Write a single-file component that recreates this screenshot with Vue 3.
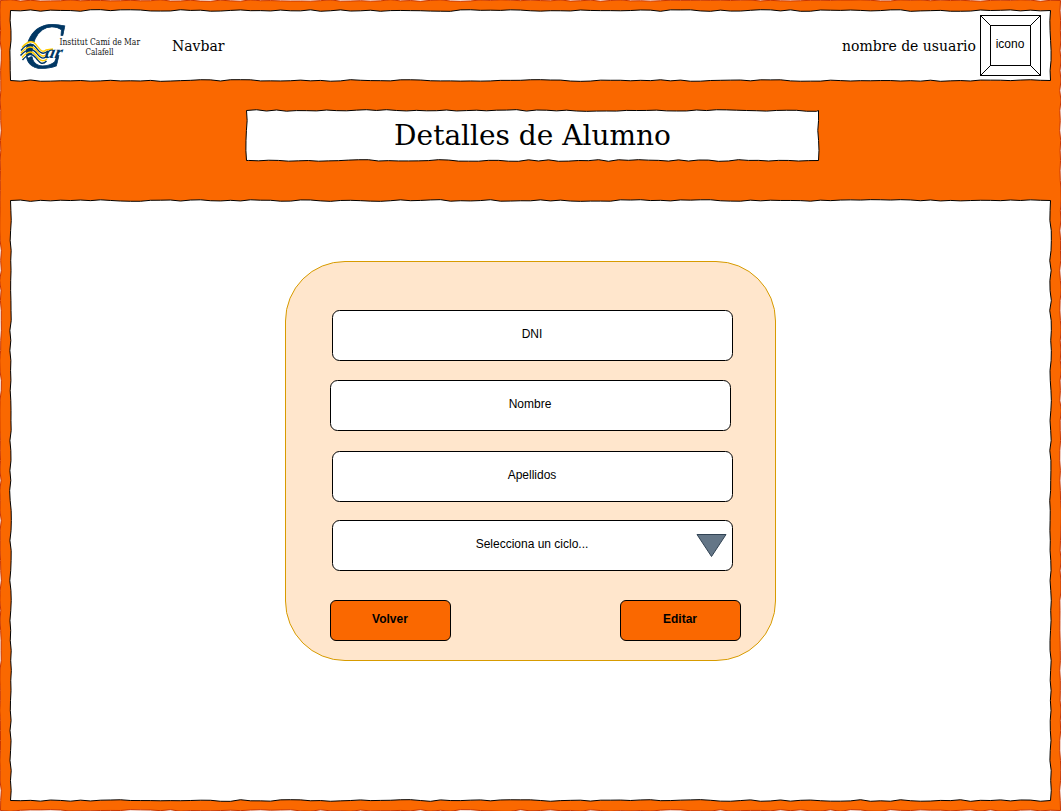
<script setup>
// Hand-drawn rectangle: every edge is split in 10px steps with a small deterministic wobble.
function sketch(w, h, seed) {
  let s = seed
  const rnd = () => {
    s = (s * 16807) % 2147483647
    return s / 2147483647
  }
  const corners = [[0.5, 0.5], [w + 0.5, 0.5], [w + 0.5, h + 0.5], [0.5, h + 0.5]]
  let d = 'M0.5 0.5'
  corners.forEach(([x, y], i) => {
    const [nx, ny] = corners[(i + 1) % 4]
    const len = Math.abs(nx - x) + Math.abs(ny - y)
    const ux = (nx - x) / len
    const uy = (ny - y) / len
    for (let p = 10; p < len; p += 10) {
      const j = (rnd() - 0.5) * 1.7
      d += `L${(x + ux * p + Math.abs(uy) * j).toFixed(2)} ${(y + uy * p + Math.abs(ux) * j).toFixed(2)}`
    }
    d += `L${nx} ${ny}`
  })
  return d + 'Z'
}

const frames = {
  page: sketch(1060, 810, 4127),
  header: sketch(1040, 70, 90211),
  title: sketch(572, 50, 7753),
  main: sketch(1040, 600, 31337),
}

const fields = [
  { label: 'DNI', cls: 'dni' },
  { label: 'Nombre', cls: 'nombre' },
  { label: 'Apellidos', cls: 'apellidos' },
  { label: 'Selecciona un ciclo...', cls: 'ciclo', select: true },
]
</script>

<template>
  <div class="page">
    <svg class="frame frame-page" width="1061" height="811"><path :d="frames.page" /></svg>

    <header class="header">
      <svg class="frame" width="1041" height="71"><path :d="frames.header" /></svg>
      <svg class="logo" width="124" height="81" viewBox="18 5 124 81">
        <text class="logo-c" transform="translate(21.8 68.2) skewX(-4) scale(.9 1)">C</text>
        <g class="waves">
          <path class="gap" d="M27 44C30 42 33 42 36 46S41 54 46 53M28 57C32 54 34 55 37 60" />
          <path class="gold" d="M22 47.500C27 41.500 32 40 35.500 44S42 54 46 50L53 49" />
          <path class="navy" d="M21 50.500C27 43.500 32 42.500 35.500 47S42 56 48 51" />
          <path class="gold" d="M21 53C27 46 32 45.500 35.500 49.500S42 59 48 54" />
          <path class="navy" d="M20.500 55.500C27 48.500 32 48 35.500 52S42 61 47 56" />
          <path class="gold" d="M22 57.500C28 51 32 50.500 35.500 55S42 63 47 59" />
          <path class="navy" d="M22.500 60C28 53.500 32 53 35.500 57.500S42 66 46.500 61" />
        </g>
        <text class="logo-ar" transform="translate(44.500 57.800) skewX(-12)" textLength="17" lengthAdjust="spacingAndGlyphs">ar</text>
        <text class="logo-name" x="59.500" y="44.500" textLength="80.500" lengthAdjust="spacingAndGlyphs">Institut Camí de Mar</text>
        <text class="logo-name" x="85.500" y="55.300" textLength="28" lengthAdjust="spacingAndGlyphs">Calafell</text>
      </svg>
      <nav class="nav">Navbar</nav>
      <span class="user">nombre de usuario</span>
      <div class="avatar">
        <svg class="bevel" width="61" height="61" shape-rendering="crispEdges">
          <path d="M.5 .5H60.500V60.500H.5ZM10.500 10.500H50.500V50.500H10.500ZM.5 .5L10.500 10.500M60.500 .5L50.500 10.500M60.500 60.500L50.500 50.500M.5 60.500L10.500 50.500" />
        </svg>
        <span class="avatar-label">icono</span>
      </div>
    </header>

    <h1 class="title">
      <svg class="frame" width="573" height="51"><path :d="frames.title" /></svg>
      <span class="title-text">Detalles de Alumno</span>
    </h1>

    <main class="main">
      <svg class="frame" width="1041" height="601"><path :d="frames.main" /></svg>
      <section class="panel">
        <div v-for="f in fields" :key="f.label" class="field" :class="f.cls">
          <span>{{ f.label }}</span>
          <svg v-if="f.select" class="arrow" width="32" height="25">
            <path d="M2 1.500H31L16.500 23.500Z" />
          </svg>
        </div>
        <div class="actions">
          <button class="btn">Volver</button>
          <button class="btn">Editar</button>
        </div>
      </section>
    </main>
  </div>
</template>

<style>
body {
  background: #fff;
}
</style>

<style scoped>
.page {
  position: relative;
  box-sizing: border-box;
  width: 1061px;
  height: 811px;
  padding: 10px;
  overflow: hidden;
  display: flex;
  flex-direction: column;
  align-items: center;
  font-family: "Liberation Sans", Arial, sans-serif;
  font-size: 12px;
  color: #000;
}
.frame {
  position: absolute;
  left: 0;
  top: 0;
  overflow: visible;
}
.frame path {
  fill: #fff;
  stroke: #000;
  stroke-width: 1;
  stroke-linejoin: round;
}
.frame-page path {
  fill: #fa6800;
  stroke: #c73500;
}
.header {
  position: relative;
  box-sizing: border-box;
  width: 1041px;
  height: 71px;
  padding: 5px 10px 5px 8px;
  display: flex;
  align-items: center;
}
.logo {
  position: relative;
  flex: none;
  overflow: visible;
}
.logo-c {
  font: italic 66px "Liberation Serif", serif;
  fill: #003764;
  stroke: #003764;
  stroke-width: 0.8;
}
.logo-ar {
  font: italic bold 18px "Liberation Serif", serif;
  fill: #003764;
}
.logo-name {
  font: 9px "DejaVu Serif Condensed", "DejaVu Serif", serif;
  fill: #111;
}
.waves path {
  fill: none;
  stroke-width: 1.4;
}
.waves .gold {
  stroke: #fc0;
}
.waves .navy {
  stroke: #003764;
}
.waves .gap {
  stroke: #fff;
  stroke-width: 2;
}
.nav,
.user {
  position: relative;
  font: 14px/20px "DejaVu Serif", serif;
}
.nav {
  margin-left: 30px;
}
.user {
  margin-left: auto;
  margin-right: 4px;
}
.avatar {
  position: relative;
  width: 61px;
  height: 61px;
  display: flex;
  align-items: center;
  justify-content: center;
}
.bevel {
  position: absolute;
  left: 0;
  top: 0;
}
.bevel path {
  fill: #fff;
  stroke: #000;
}
.avatar-label {
  position: relative;
  line-height: 14px;
  padding: 0 1px 3px 0;
}
.title {
  position: relative;
  width: 573px;
  height: 51px;
  margin: 29px 0 0 4px;
  text-align: center;
  font: 28px/51px "DejaVu Serif", serif;
}
.title-text {
  position: relative;
}
.main {
  position: relative;
  box-sizing: border-box;
  width: 1041px;
  height: 601px;
  margin-top: 39px;
  padding-top: 61px;
}
.panel {
  position: relative;
  box-sizing: border-box;
  width: 491px;
  height: 400px;
  margin: 0 auto;
  padding: 48px 34px 0 46px;
  border: 1px solid #d79b00;
  border-radius: 60px;
  background: #ffe6cc;
}
.field {
  position: relative;
  box-sizing: border-box;
  width: 401px;
  height: 51px;
  padding: 0 1px 3px 0;
  border: 1px solid #000;
  border-radius: 7.5px;
  background: #fff;
  display: flex;
  align-items: center;
  justify-content: center;
}
.nombre {
  margin: 19px 0 20px -2px;
}
.ciclo {
  margin-top: 18px;
}
.arrow {
  position: absolute;
  right: 5px;
  top: 12px;
}
.arrow path {
  fill: #647687;
  stroke: #314354;
}
.actions {
  display: flex;
  justify-content: space-between;
  width: 411px;
  margin: 29px 0 0 -2px;
}
.btn {
  box-sizing: border-box;
  width: 121px;
  height: 41px;
  padding: 0 1px 3px 0;
  border: 1px solid #000;
  border-radius: 6px;
  background: #fa6800;
  color: #000;
  font: bold 12px/14px "Liberation Sans", Arial, sans-serif;
}
</style>
